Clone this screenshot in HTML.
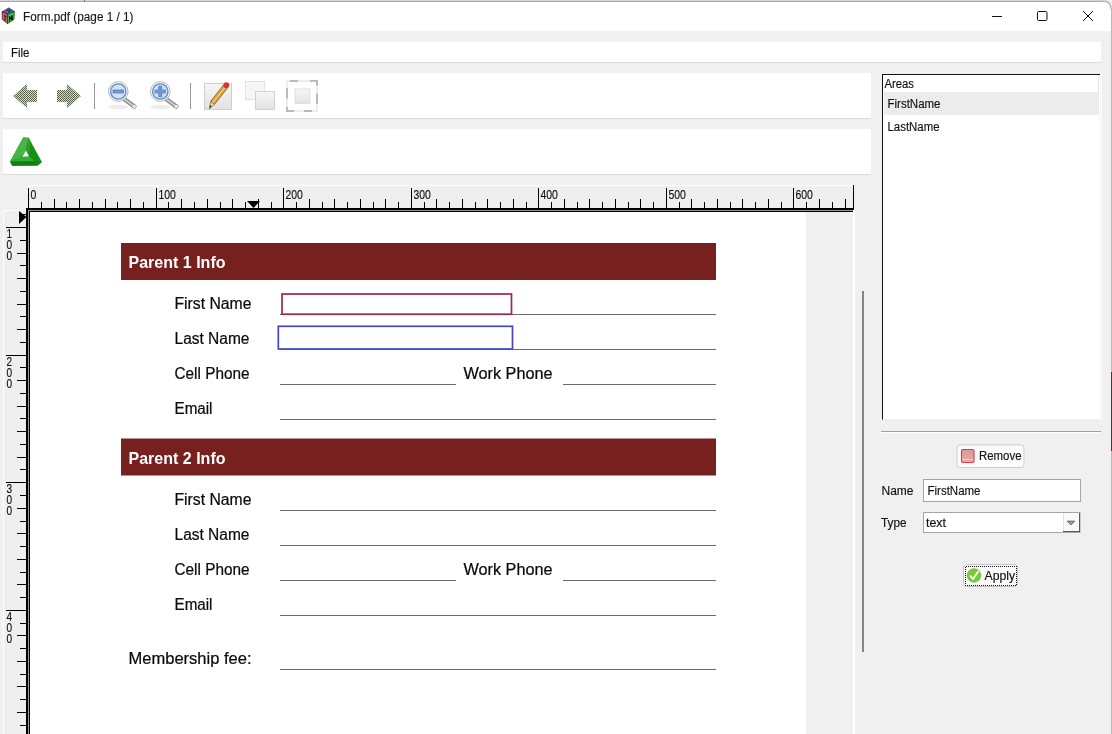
<!DOCTYPE html>
<html><head><meta charset="utf-8"><title>Form.pdf</title>
<style>html,body{margin:0;padding:0;width:1112px;height:734px;overflow:hidden;background:#f0f0f0;font-family:"Liberation Sans",sans-serif}</style>
</head><body>
<svg width="1112" height="734" viewBox="0 0 1112 734" style="display:block;will-change:transform"><rect x="0" y="0" width="1112" height="734" fill="#f0f0f0" />
<path d="M0 0 H1103 Q1111 0 1111 8 V31 H0 Z" fill="#ffffff"/>
<line x1="0" y1="0.5" x2="1103" y2="0.5" stroke="#d6d6d6" stroke-width="1" />
<line x1="0" y1="1.5" x2="1103" y2="1.5" stroke="#ababab" stroke-width="1" />
<rect x="84" y="0" width="1" height="2" fill="#7a7a7a" />
<path d="M1103 1 Q1111 1 1111 9" fill="none" stroke="#b4b4b4" stroke-width="1.5"/>
<rect x="1111" y="9" width="1" height="725" fill="#b8b8b8" />
<g><polygon points="8.8,7.9 14.4,11.5 7.8,14 2.1,11.8" fill="#4a6cc4" stroke="#1a2450" stroke-width="0.7"/><polygon points="2.1,11.8 7.8,14 7.5,23.6 2.3,19.4" fill="#d8566a" stroke="#301010" stroke-width="0.7"/><polygon points="14.4,11.5 7.8,14 7.5,23.6 14,19.4" fill="#44c444" stroke="#103010" stroke-width="0.7"/><path d="M4 15.5 L6.5 16.5 M5.2 16 L5 21" stroke="#222" stroke-width="1"/><path d="M9.5 16 L9.5 21.5 M12.5 15 L9.6 18.5 L12.8 20" stroke="#102010" stroke-width="1"/><path d="M6.5 10.5 L9.5 9.5 L10.5 11 L8 12" fill="none" stroke="#0e1a40" stroke-width="0.9"/></g>
<text x="23" y="21" font-family="Liberation Sans" font-size="12" font-weight="normal" fill="#1a1a1a" textLength="110.5" lengthAdjust="spacingAndGlyphs"  stroke="#1a1a1a" stroke-width="0.15">Form.pdf (page 1 / 1)</text>
<line x1="992" y1="16.5" x2="1002" y2="16.5" stroke="#111" stroke-width="1" />
<rect x="1037.5" y="11.5" width="9.5" height="9" rx="1.2" fill="none" stroke="#111" stroke-width="1"/>
<line x1="1083" y1="11" x2="1093" y2="21" stroke="#111" stroke-width="1" />
<line x1="1093" y1="11" x2="1083" y2="21" stroke="#111" stroke-width="1" />
<rect x="3" y="42" width="1098" height="20" fill="#ffffff" />
<line x1="3" y1="62.5" x2="1101" y2="62.5" stroke="#dcdcdc" stroke-width="1" />
<text x="11" y="57" font-family="Liberation Sans" font-size="12" font-weight="normal" fill="#111" textLength="18.5" lengthAdjust="spacingAndGlyphs"  stroke="#111" stroke-width="0.15">File</text>
<rect x="3" y="73" width="868" height="45" fill="#ffffff" />
<line x1="3" y1="118.5" x2="871" y2="118.5" stroke="#dcdcdc" stroke-width="1" />
<rect x="3" y="129" width="868" height="45" fill="#ffffff" />
<line x1="3" y1="174.5" x2="871" y2="174.5" stroke="#dcdcdc" stroke-width="1" />
<rect x="28" y="185" width="825" height="23" fill="#efefef" />
<line x1="28" y1="185.5" x2="853" y2="185.5" stroke="#ffffff" stroke-width="1" />
<rect x="3" y="210" width="23" height="524" fill="#efefef" />
<line x1="3.5" y1="210" x2="3.5" y2="734" stroke="#ffffff" stroke-width="1" />
<line x1="3" y1="210.5" x2="26" y2="210.5" stroke="#ffffff" stroke-width="1" />
<rect x="853" y="210" width="2" height="524" fill="#ffffff" />
<rect x="30" y="212" width="776" height="522" fill="#ffffff" />
<rect x="26" y="208" width="827" height="2" fill="#000" />
<rect x="28" y="210" width="825" height="1" fill="#9a9a9a" />
<rect x="28" y="211" width="825" height="1" fill="#000" />
<rect x="26" y="208" width="2" height="526" fill="#000" />
<rect x="28" y="210" width="1" height="524" fill="#9a9a9a" />
<rect x="29" y="211" width="1" height="523" fill="#000" />
<rect x="853" y="185" width="1" height="25" fill="#000" />
<rect x="28" y="188" width="1" height="20" fill="#000" />
<text x="30.5" y="199" font-family="Liberation Sans" font-size="12.5" font-weight="normal" fill="#111" textLength="5.8" lengthAdjust="spacingAndGlyphs"  stroke="#111" stroke-width="0.15">0</text>
<rect x="41" y="202" width="1" height="6" fill="#000" />
<rect x="54" y="199" width="1" height="9" fill="#000" />
<rect x="66" y="202" width="1" height="6" fill="#000" />
<rect x="79" y="199" width="1" height="9" fill="#000" />
<rect x="92" y="202" width="1" height="6" fill="#000" />
<rect x="105" y="199" width="1" height="9" fill="#000" />
<rect x="117" y="202" width="1" height="6" fill="#000" />
<rect x="130" y="199" width="1" height="9" fill="#000" />
<rect x="143" y="202" width="1" height="6" fill="#000" />
<rect x="156" y="188" width="1" height="20" fill="#000" />
<text x="158.5" y="199" font-family="Liberation Sans" font-size="12.5" font-weight="normal" fill="#111" textLength="17.4" lengthAdjust="spacingAndGlyphs"  stroke="#111" stroke-width="0.15">100</text>
<rect x="168" y="202" width="1" height="6" fill="#000" />
<rect x="181" y="199" width="1" height="9" fill="#000" />
<rect x="194" y="202" width="1" height="6" fill="#000" />
<rect x="207" y="199" width="1" height="9" fill="#000" />
<rect x="220" y="202" width="1" height="6" fill="#000" />
<rect x="232" y="199" width="1" height="9" fill="#000" />
<rect x="245" y="202" width="1" height="6" fill="#000" />
<rect x="258" y="199" width="1" height="9" fill="#000" />
<rect x="271" y="202" width="1" height="6" fill="#000" />
<rect x="283" y="188" width="1" height="20" fill="#000" />
<text x="285.5" y="199" font-family="Liberation Sans" font-size="12.5" font-weight="normal" fill="#111" textLength="17.4" lengthAdjust="spacingAndGlyphs"  stroke="#111" stroke-width="0.15">200</text>
<rect x="296" y="202" width="1" height="6" fill="#000" />
<rect x="309" y="199" width="1" height="9" fill="#000" />
<rect x="322" y="202" width="1" height="6" fill="#000" />
<rect x="334" y="199" width="1" height="9" fill="#000" />
<rect x="347" y="202" width="1" height="6" fill="#000" />
<rect x="360" y="199" width="1" height="9" fill="#000" />
<rect x="373" y="202" width="1" height="6" fill="#000" />
<rect x="385" y="199" width="1" height="9" fill="#000" />
<rect x="398" y="202" width="1" height="6" fill="#000" />
<rect x="411" y="188" width="1" height="20" fill="#000" />
<text x="413.5" y="199" font-family="Liberation Sans" font-size="12.5" font-weight="normal" fill="#111" textLength="17.4" lengthAdjust="spacingAndGlyphs"  stroke="#111" stroke-width="0.15">300</text>
<rect x="424" y="202" width="1" height="6" fill="#000" />
<rect x="436" y="199" width="1" height="9" fill="#000" />
<rect x="449" y="202" width="1" height="6" fill="#000" />
<rect x="462" y="199" width="1" height="9" fill="#000" />
<rect x="475" y="202" width="1" height="6" fill="#000" />
<rect x="487" y="199" width="1" height="9" fill="#000" />
<rect x="500" y="202" width="1" height="6" fill="#000" />
<rect x="513" y="199" width="1" height="9" fill="#000" />
<rect x="526" y="202" width="1" height="6" fill="#000" />
<rect x="538" y="188" width="1" height="20" fill="#000" />
<text x="540.5" y="199" font-family="Liberation Sans" font-size="12.5" font-weight="normal" fill="#111" textLength="17.4" lengthAdjust="spacingAndGlyphs"  stroke="#111" stroke-width="0.15">400</text>
<rect x="551" y="202" width="1" height="6" fill="#000" />
<rect x="564" y="199" width="1" height="9" fill="#000" />
<rect x="577" y="202" width="1" height="6" fill="#000" />
<rect x="589" y="199" width="1" height="9" fill="#000" />
<rect x="602" y="202" width="1" height="6" fill="#000" />
<rect x="615" y="199" width="1" height="9" fill="#000" />
<rect x="628" y="202" width="1" height="6" fill="#000" />
<rect x="640" y="199" width="1" height="9" fill="#000" />
<rect x="653" y="202" width="1" height="6" fill="#000" />
<rect x="666" y="188" width="1" height="20" fill="#000" />
<text x="668.5" y="199" font-family="Liberation Sans" font-size="12.5" font-weight="normal" fill="#111" textLength="17.4" lengthAdjust="spacingAndGlyphs"  stroke="#111" stroke-width="0.15">500</text>
<rect x="679" y="202" width="1" height="6" fill="#000" />
<rect x="691" y="199" width="1" height="9" fill="#000" />
<rect x="704" y="202" width="1" height="6" fill="#000" />
<rect x="717" y="199" width="1" height="9" fill="#000" />
<rect x="730" y="202" width="1" height="6" fill="#000" />
<rect x="742" y="199" width="1" height="9" fill="#000" />
<rect x="755" y="202" width="1" height="6" fill="#000" />
<rect x="768" y="199" width="1" height="9" fill="#000" />
<rect x="781" y="202" width="1" height="6" fill="#000" />
<rect x="793" y="188" width="1" height="20" fill="#000" />
<text x="795.5" y="199" font-family="Liberation Sans" font-size="12.5" font-weight="normal" fill="#111" textLength="17.4" lengthAdjust="spacingAndGlyphs"  stroke="#111" stroke-width="0.15">600</text>
<rect x="806" y="202" width="1" height="6" fill="#000" />
<rect x="819" y="199" width="1" height="9" fill="#000" />
<rect x="832" y="202" width="1" height="6" fill="#000" />
<rect x="845" y="199" width="1" height="9" fill="#000" />
<rect x="20" y="214" width="6" height="1" fill="#000" />
<rect x="6" y="227" width="20" height="1" fill="#000" />
<text x="6.5" y="237.5" font-family="Liberation Sans" font-size="12.5" font-weight="normal" fill="#111" textLength="5.6" lengthAdjust="spacingAndGlyphs"  stroke="#111" stroke-width="0.15">1</text>
<text x="6.5" y="248.5" font-family="Liberation Sans" font-size="12.5" font-weight="normal" fill="#111" textLength="5.6" lengthAdjust="spacingAndGlyphs"  stroke="#111" stroke-width="0.15">0</text>
<text x="6.5" y="259.5" font-family="Liberation Sans" font-size="12.5" font-weight="normal" fill="#111" textLength="5.6" lengthAdjust="spacingAndGlyphs"  stroke="#111" stroke-width="0.15">0</text>
<rect x="20" y="240" width="6" height="1" fill="#000" />
<rect x="17" y="253" width="9" height="1" fill="#000" />
<rect x="20" y="265" width="6" height="1" fill="#000" />
<rect x="17" y="278" width="9" height="1" fill="#000" />
<rect x="20" y="291" width="6" height="1" fill="#000" />
<rect x="17" y="304" width="9" height="1" fill="#000" />
<rect x="20" y="316" width="6" height="1" fill="#000" />
<rect x="17" y="329" width="9" height="1" fill="#000" />
<rect x="20" y="342" width="6" height="1" fill="#000" />
<rect x="6" y="355" width="20" height="1" fill="#000" />
<text x="6.5" y="365.5" font-family="Liberation Sans" font-size="12.5" font-weight="normal" fill="#111" textLength="5.6" lengthAdjust="spacingAndGlyphs"  stroke="#111" stroke-width="0.15">2</text>
<text x="6.5" y="376.5" font-family="Liberation Sans" font-size="12.5" font-weight="normal" fill="#111" textLength="5.6" lengthAdjust="spacingAndGlyphs"  stroke="#111" stroke-width="0.15">0</text>
<text x="6.5" y="387.5" font-family="Liberation Sans" font-size="12.5" font-weight="normal" fill="#111" textLength="5.6" lengthAdjust="spacingAndGlyphs"  stroke="#111" stroke-width="0.15">0</text>
<rect x="20" y="367" width="6" height="1" fill="#000" />
<rect x="17" y="380" width="9" height="1" fill="#000" />
<rect x="20" y="393" width="6" height="1" fill="#000" />
<rect x="17" y="406" width="9" height="1" fill="#000" />
<rect x="20" y="418" width="6" height="1" fill="#000" />
<rect x="17" y="431" width="9" height="1" fill="#000" />
<rect x="20" y="444" width="6" height="1" fill="#000" />
<rect x="17" y="457" width="9" height="1" fill="#000" />
<rect x="20" y="469" width="6" height="1" fill="#000" />
<rect x="6" y="482" width="20" height="1" fill="#000" />
<text x="6.5" y="492.5" font-family="Liberation Sans" font-size="12.5" font-weight="normal" fill="#111" textLength="5.6" lengthAdjust="spacingAndGlyphs"  stroke="#111" stroke-width="0.15">3</text>
<text x="6.5" y="503.5" font-family="Liberation Sans" font-size="12.5" font-weight="normal" fill="#111" textLength="5.6" lengthAdjust="spacingAndGlyphs"  stroke="#111" stroke-width="0.15">0</text>
<text x="6.5" y="514.5" font-family="Liberation Sans" font-size="12.5" font-weight="normal" fill="#111" textLength="5.6" lengthAdjust="spacingAndGlyphs"  stroke="#111" stroke-width="0.15">0</text>
<rect x="20" y="495" width="6" height="1" fill="#000" />
<rect x="17" y="508" width="9" height="1" fill="#000" />
<rect x="20" y="521" width="6" height="1" fill="#000" />
<rect x="17" y="533" width="9" height="1" fill="#000" />
<rect x="20" y="546" width="6" height="1" fill="#000" />
<rect x="17" y="559" width="9" height="1" fill="#000" />
<rect x="20" y="572" width="6" height="1" fill="#000" />
<rect x="17" y="584" width="9" height="1" fill="#000" />
<rect x="20" y="597" width="6" height="1" fill="#000" />
<rect x="6" y="610" width="20" height="1" fill="#000" />
<text x="6.5" y="620.5" font-family="Liberation Sans" font-size="12.5" font-weight="normal" fill="#111" textLength="5.6" lengthAdjust="spacingAndGlyphs"  stroke="#111" stroke-width="0.15">4</text>
<text x="6.5" y="631.5" font-family="Liberation Sans" font-size="12.5" font-weight="normal" fill="#111" textLength="5.6" lengthAdjust="spacingAndGlyphs"  stroke="#111" stroke-width="0.15">0</text>
<text x="6.5" y="642.5" font-family="Liberation Sans" font-size="12.5" font-weight="normal" fill="#111" textLength="5.6" lengthAdjust="spacingAndGlyphs"  stroke="#111" stroke-width="0.15">0</text>
<rect x="20" y="623" width="6" height="1" fill="#000" />
<rect x="17" y="635" width="9" height="1" fill="#000" />
<rect x="20" y="648" width="6" height="1" fill="#000" />
<rect x="17" y="661" width="9" height="1" fill="#000" />
<rect x="20" y="674" width="6" height="1" fill="#000" />
<rect x="17" y="686" width="9" height="1" fill="#000" />
<rect x="20" y="699" width="6" height="1" fill="#000" />
<rect x="17" y="712" width="9" height="1" fill="#000" />
<rect x="20" y="725" width="6" height="1" fill="#000" />
<polygon points="247,201 260,201 253.5,208" fill="#000"/>
<polygon points="19,211 26.5,217 19,224" fill="#000"/>
<rect x="121" y="243" width="595" height="37" fill="#76211e" />
<text x="128.5" y="268" font-family="Liberation Sans" font-size="16.5" font-weight="bold" fill="#ffffff" textLength="97" lengthAdjust="spacingAndGlyphs" >Parent 1 Info</text>
<rect x="121" y="438.5" width="595" height="37" fill="#76211e" />
<text x="128.5" y="463.5" font-family="Liberation Sans" font-size="16.5" font-weight="bold" fill="#ffffff" textLength="97" lengthAdjust="spacingAndGlyphs" >Parent 2 Info</text>
<text x="174.5" y="308.8" font-family="Liberation Sans" font-size="15.8" font-weight="normal" fill="#0a0a0a" textLength="77" lengthAdjust="spacingAndGlyphs" stroke="#0a0a0a" stroke-width="0.22">First Name</text>
<text x="174.5" y="343.7" font-family="Liberation Sans" font-size="15.8" font-weight="normal" fill="#0a0a0a" textLength="75" lengthAdjust="spacingAndGlyphs" stroke="#0a0a0a" stroke-width="0.22">Last Name</text>
<text x="174.5" y="378.8" font-family="Liberation Sans" font-size="15.8" font-weight="normal" fill="#0a0a0a" textLength="75" lengthAdjust="spacingAndGlyphs" stroke="#0a0a0a" stroke-width="0.22">Cell Phone</text>
<text x="174.5" y="413.9" font-family="Liberation Sans" font-size="15.8" font-weight="normal" fill="#0a0a0a" textLength="38" lengthAdjust="spacingAndGlyphs" stroke="#0a0a0a" stroke-width="0.22">Email</text>
<text x="463.5" y="378.8" font-family="Liberation Sans" font-size="15.8" font-weight="normal" fill="#0a0a0a" textLength="89" lengthAdjust="spacingAndGlyphs" stroke="#0a0a0a" stroke-width="0.22">Work Phone</text>
<rect x="280" y="314" width="436" height="1" fill="#6a6a6a" />
<rect x="280" y="349" width="436" height="1" fill="#6a6a6a" />
<rect x="280" y="384" width="176" height="1" fill="#6a6a6a" />
<rect x="563" y="384" width="153" height="1" fill="#6a6a6a" />
<rect x="280" y="419" width="436" height="1" fill="#6a6a6a" />
<text x="174.5" y="504.9" font-family="Liberation Sans" font-size="15.8" font-weight="normal" fill="#0a0a0a" textLength="77" lengthAdjust="spacingAndGlyphs" stroke="#0a0a0a" stroke-width="0.22">First Name</text>
<text x="174.5" y="539.8" font-family="Liberation Sans" font-size="15.8" font-weight="normal" fill="#0a0a0a" textLength="75" lengthAdjust="spacingAndGlyphs" stroke="#0a0a0a" stroke-width="0.22">Last Name</text>
<text x="174.5" y="574.8" font-family="Liberation Sans" font-size="15.8" font-weight="normal" fill="#0a0a0a" textLength="75" lengthAdjust="spacingAndGlyphs" stroke="#0a0a0a" stroke-width="0.22">Cell Phone</text>
<text x="174.5" y="609.8" font-family="Liberation Sans" font-size="15.8" font-weight="normal" fill="#0a0a0a" textLength="38" lengthAdjust="spacingAndGlyphs" stroke="#0a0a0a" stroke-width="0.22">Email</text>
<text x="463.5" y="574.8" font-family="Liberation Sans" font-size="15.8" font-weight="normal" fill="#0a0a0a" textLength="89" lengthAdjust="spacingAndGlyphs" stroke="#0a0a0a" stroke-width="0.22">Work Phone</text>
<rect x="280" y="510" width="436" height="1" fill="#6a6a6a" />
<rect x="280" y="545" width="436" height="1" fill="#6a6a6a" />
<rect x="280" y="580" width="176" height="1" fill="#6a6a6a" />
<rect x="563" y="580" width="153" height="1" fill="#6a6a6a" />
<rect x="280" y="615" width="436" height="1" fill="#6a6a6a" />
<text x="128.5" y="663.8" font-family="Liberation Sans" font-size="15.8" font-weight="normal" fill="#0a0a0a" textLength="123" lengthAdjust="spacingAndGlyphs" stroke="#0a0a0a" stroke-width="0.22">Membership fee:</text>
<rect x="280" y="669" width="436" height="1" fill="#6a6a6a" />
<rect x="282" y="294" width="229.5" height="20.2" fill="none" stroke="#a02452" stroke-width="1.7"/>
<rect x="278.3" y="326.3" width="234.2" height="22.7" fill="none" stroke="#4646cc" stroke-width="1.7"/>
<rect x="862" y="291" width="2" height="361" fill="#858585" />
<rect x="882" y="74" width="219" height="346" fill="#ffffff" />
<rect x="882" y="74" width="218" height="1" fill="#111" />
<rect x="882" y="74" width="1" height="346" fill="#111" />
<rect x="1100" y="74" width="1" height="346" fill="#f4f4f4" />
<rect x="1101" y="74" width="1" height="347" fill="#ffffff" />
<rect x="882" y="419.5" width="219" height="1" fill="#e8e8e8" />
<text x="884.5" y="88" font-family="Liberation Sans" font-size="12" font-weight="normal" fill="#111" textLength="29.5" lengthAdjust="spacingAndGlyphs"  stroke="#111" stroke-width="0.15">Areas</text>
<rect x="884" y="92" width="215" height="23" fill="#ececec" />
<rect x="1098" y="75" width="1" height="17" fill="#e2e2e2" />
<text x="887.5" y="108" font-family="Liberation Sans" font-size="12" font-weight="normal" fill="#111" textLength="53" lengthAdjust="spacingAndGlyphs"  stroke="#111" stroke-width="0.15">FirstName</text>
<text x="887.5" y="131" font-family="Liberation Sans" font-size="12" font-weight="normal" fill="#111" textLength="52" lengthAdjust="spacingAndGlyphs"  stroke="#111" stroke-width="0.15">LastName</text>
<rect x="881" y="431" width="220" height="1" fill="#a0a0a0" />
<rect x="881" y="432" width="220" height="1" fill="#ffffff" />
<rect x="957" y="445" width="67" height="22.5" rx="3" fill="#fbfbfb" stroke="#cdcdcd" stroke-width="1"/>
<defs><linearGradient id="rg" x1="0" y1="0" x2="0" y2="1"><stop offset="0" stop-color="#d99a9a"/><stop offset="1" stop-color="#f4a4a4"/></linearGradient></defs>
<rect x="961.5" y="449.5" width="12.5" height="13" rx="1.2" fill="url(#rg)" stroke="#d04444" stroke-width="1.1"/>
<rect x="962.2" y="459" width="11" height="1" fill="#f8d0d0"/>
<text x="979" y="460" font-family="Liberation Sans" font-size="12" font-weight="normal" fill="#111" textLength="42.5" lengthAdjust="spacingAndGlyphs"  stroke="#111" stroke-width="0.15">Remove</text>
<text x="881.5" y="495" font-family="Liberation Sans" font-size="12" font-weight="normal" fill="#111" textLength="32" lengthAdjust="spacingAndGlyphs"  stroke="#111" stroke-width="0.15">Name</text>
<rect x="923.5" y="479.5" width="157" height="22" fill="#fff" stroke="#a5a5a5" stroke-width="1"/>
<text x="927.5" y="495" font-family="Liberation Sans" font-size="12" font-weight="normal" fill="#111" textLength="53" lengthAdjust="spacingAndGlyphs"  stroke="#111" stroke-width="0.15">FirstName</text>
<text x="881" y="527" font-family="Liberation Sans" font-size="12" font-weight="normal" fill="#111" textLength="25.5" lengthAdjust="spacingAndGlyphs"  stroke="#111" stroke-width="0.15">Type</text>
<rect x="923.5" y="512.5" width="156.5" height="20" fill="#fff" stroke="#a5a5a5" stroke-width="1"/>
<text x="926" y="527" font-family="Liberation Sans" font-size="12" font-weight="normal" fill="#111" textLength="20" lengthAdjust="spacingAndGlyphs"  stroke="#111" stroke-width="0.15">text</text>
<rect x="1063" y="513" width="16" height="18" fill="#f9f9f9"/>
<line x1="1063.5" y1="513" x2="1063.5" y2="532" stroke="#e0e0e0" stroke-width="1" />
<line x1="1079.5" y1="513" x2="1079.5" y2="532" stroke="#5a5a5a" stroke-width="1" />
<line x1="1063" y1="531.5" x2="1080" y2="531.5" stroke="#5a5a5a" stroke-width="1" />
<polygon points="1067.3,521.2 1074.7,521.2 1071,524.8" fill="#a8a8a8" stroke="#555" stroke-width="0.9" stroke-linejoin="round"/>
<rect x="963.5" y="564.5" width="54" height="22" rx="3" fill="#fbfbfb" stroke="#c4c4c4" stroke-width="1"/>
<defs><pattern id="dots" width="2" height="2" patternUnits="userSpaceOnUse"><rect width="1" height="1" fill="#111"/><rect x="1" y="1" width="1" height="1" fill="#111"/></pattern></defs>
<rect x="965" y="566" width="52" height="1" fill="url(#dots)"/>
<rect x="965" y="585" width="52" height="1" fill="url(#dots)"/>
<rect x="965" y="566" width="1" height="20" fill="url(#dots)"/>
<rect x="1016" y="566" width="1" height="20" fill="url(#dots)"/>
<circle cx="974" cy="575.5" r="7.2" fill="#79c83a"/>
<path d="M970 575.5 L973 579 L978.5 571" fill="none" stroke="#fff" stroke-width="1.8"/>
<text x="984.5" y="580" font-family="Liberation Sans" font-size="12" font-weight="normal" fill="#111" textLength="30.5" lengthAdjust="spacingAndGlyphs"  stroke="#111" stroke-width="0.15">Apply</text>
<defs><pattern id="dith" width="2" height="2" patternUnits="userSpaceOnUse"><rect width="2" height="2" fill="#cfe2b2"/><rect width="1" height="1" fill="#56604a"/><rect x="1" y="1" width="1" height="1" fill="#56604a"/></pattern></defs>
<polygon points="13,96 27,84 27,90 37,90 37,102 27,102 27,108" fill="url(#dith)"/>
<polygon points="81,96 67,84 67,90 57,90 57,102 67,102 67,108" fill="url(#dith)"/>
<rect x="94" y="83" width="1" height="26" fill="#9a9a9a" />
<rect x="190" y="83" width="1" height="26" fill="#9a9a9a" />
<ellipse cx="118.3" cy="107.0" rx="10" ry="2.2" fill="#ececec"/>
<line x1="124.8" y1="99.5" x2="134.3" y2="106.5" stroke="#8c8c8c" stroke-width="4.6" stroke-linecap="round"/>
<line x1="124.8" y1="99.5" x2="134.3" y2="106.5" stroke="#cfcfcf" stroke-width="1.6" stroke-linecap="round"/>
<circle cx="134.3" cy="106.5" r="1.5" fill="#f4f4f4"/>
<circle cx="118.3" cy="91.5" r="9.8" fill="#fbfcfd" stroke="#b2b4b6" stroke-width="1"/>
<circle cx="118.3" cy="91.5" r="7.7" fill="#d2e2f5" stroke="#6288c6" stroke-width="1.3"/>
<rect x="113.0" y="90.0" width="10.6" height="3" fill="#7399d4" stroke="#4f76b8" stroke-width="0.7"/>
<ellipse cx="160.3" cy="107.0" rx="10" ry="2.2" fill="#ececec"/>
<line x1="166.8" y1="99.5" x2="176.3" y2="106.5" stroke="#8c8c8c" stroke-width="4.6" stroke-linecap="round"/>
<line x1="166.8" y1="99.5" x2="176.3" y2="106.5" stroke="#cfcfcf" stroke-width="1.6" stroke-linecap="round"/>
<circle cx="176.3" cy="106.5" r="1.5" fill="#f4f4f4"/>
<circle cx="160.3" cy="91.5" r="9.8" fill="#fbfcfd" stroke="#b2b4b6" stroke-width="1"/>
<circle cx="160.3" cy="91.5" r="7.7" fill="#d2e2f5" stroke="#6288c6" stroke-width="1.3"/>
<rect x="155.0" y="90.0" width="10.6" height="3" fill="#7399d4" stroke="#4f76b8" stroke-width="0.7"/>
<rect x="158.8" y="86.2" width="3" height="10.6" fill="#7399d4" stroke="#4f76b8" stroke-width="0.7"/>
<rect x="155.4" y="90.4" width="9.8" height="2.2" fill="#7399d4"/>
<defs><linearGradient id="pg" x1="0" y1="0" x2="0" y2="1"><stop offset="0" stop-color="#f6f6f6"/><stop offset="1" stop-color="#e2e2e2"/></linearGradient></defs><rect x="204.5" y="83.5" width="27" height="26" fill="url(#pg)" stroke="#cfcfcf" stroke-width="1"/>
<polygon points="214.4,104.5 210.6,101.5 223.6,85 227.4,88" fill="#dcaa4a" stroke="#806020" stroke-width="0.9"/>
<line x1="212.5" y1="103" x2="225.5" y2="86.5" stroke="#f0c868" stroke-width="1.2"/>
<polygon points="214.4,104.5 210.6,101.5 209.3,108.7" fill="#eed8a8" stroke="#806020" stroke-width="0.6"/>
<polygon points="210.2,105 211.6,106.3 209.3,108.7" fill="#222"/>
<circle cx="226.3" cy="85.2" r="2.9" fill="#d83434"/>
<rect x="245.5" y="81.5" width="19" height="18" fill="#f6f6f6" stroke="#e2e2e2" stroke-width="1"/>
<rect x="255.5" y="91.5" width="19" height="18" fill="url(#pg)" stroke="#d2d2d2" stroke-width="1"/>
<rect x="287" y="81" width="30" height="30" fill="none" stroke="#ededed" stroke-width="2"/>
<path d="M290 81 H298 M310 81 H318 M317 80 V85.5 M317 93.5 V104 M312 111 H304 M294 111 H286 M287 112 V107 M287 98.5 V88" stroke="#bababa" stroke-width="2"/>
<rect x="295" y="89" width="15" height="14.5" fill="url(#pg)" stroke="#dadada" stroke-width="0.8"/>
<polygon points="23.2,137.6 28.6,137.8 41.9,162 37.6,165.5 12.3,165.7 10.1,161.6" fill="#179017"/>
<polygon points="23.2,137.6 28.6,137.8 25.9,150.7 23,156.6 11.2,161 10.1,161.6" fill="#46b446"/>
<polygon points="28.6,137.8 31.5,143 28.3,156.2 25.9,150.7" fill="#2a9e2a"/>
<polygon points="11.2,161 23,156.6 28.6,156.1 34.8,161.2 10.1,161.6" fill="#38aa38"/>
<polygon points="10.1,161.6 34.8,161.2 37.6,165.5 12.3,165.7" fill="#0f800f"/>
<polygon points="34.8,161.2 41.9,162 37.6,165.5" fill="#128612"/>
<polygon points="25.9,150.5 22.6,156.8 28.9,156.3" fill="#ffffff"/>
<rect x="1111" y="372" width="1" height="79" fill="#4a3434" /></svg>
</body></html>
